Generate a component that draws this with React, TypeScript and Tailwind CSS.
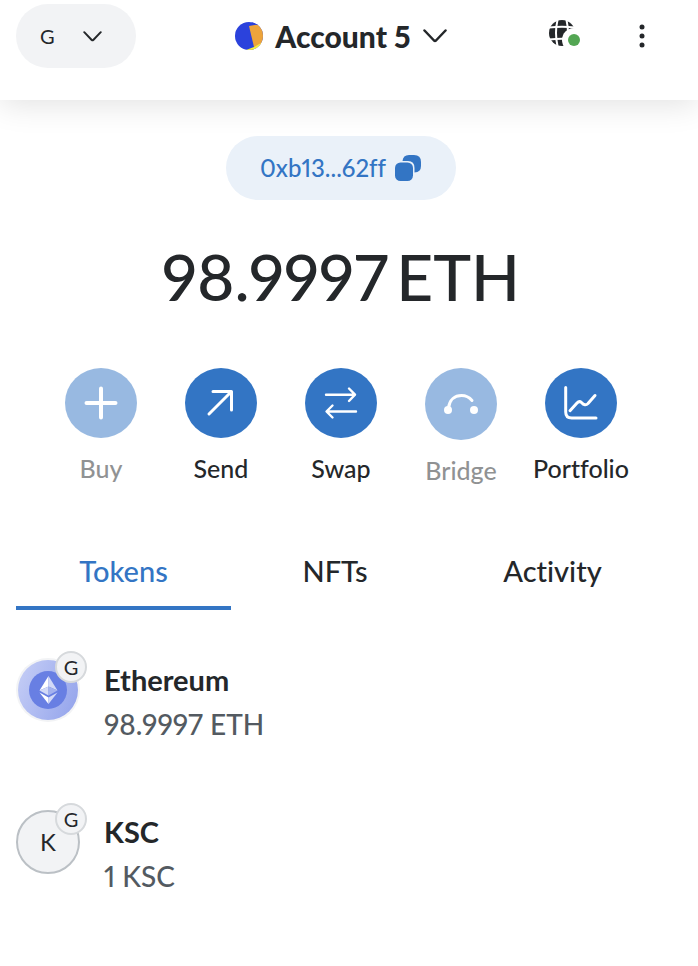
import type { ReactNode } from "react";

function Chevron({ className }: { className: string }) {
  return (
    <svg viewBox="0 0 24 14" className={className} fill="none" stroke="currentColor" strokeWidth="2.500" strokeLinecap="round" strokeLinejoin="round" aria-hidden="true">
      <path d="M1.500 1.500 L11 11.500 Q12 12.300 13 11.500 L22.500 1.500" />
    </svg>
  );
}

function Header() {
  return (
    <header className="grid h-[100px] grid-cols-[1fr_auto_1fr] items-start bg-white pt-1 pr-4 shadow-[0_4px_30px_rgba(0,0,0,0.12)]">
      <div className="flex pl-4">
        <button type="button" aria-label="Network G" className="flex h-16 w-[120px] items-center gap-7 rounded-full bg-[#f2f3f5] pl-6 text-xl">
          G
          <Chevron className="h-[11px] w-[19px]" />
        </button>
      </div>
      <button type="button" className="flex h-16 items-center gap-3 text-[30px] font-black">
        <svg viewBox="0 0 28 28" className="size-7" aria-hidden="true">
          <defs>
            <clipPath id="avatar-clip">
              <circle cx="14" cy="14" r="14" />
            </clipPath>
          </defs>
          <g clipPath="url(#avatar-clip)">
            <rect width="28" height="28" fill="#2b42dc" />
            <path d="M14 4 L30 1 V23 L19 25 Z" fill="#eda43b" />
            <path d="M11 28 L19 25 L30 19 V30 H11 Z" fill="#f8f03c" />
            <path d="M16 0 L21 3 L30 1 V0 Z" fill="#2b42dc" />
          </g>
        </svg>
        Account 5
        <Chevron className="h-3.5 w-6" />
      </button>
      <div className="flex h-16 items-center justify-end gap-[58px] pr-[37px]">
        <button type="button" aria-label="Connected sites">
          <svg viewBox="0 0 32 32" className="size-8" aria-hidden="true">
            <circle cx="13" cy="13" r="13" fill="#24272a" />
            <g fill="none" stroke="#fff" strokeWidth="2">
              <path d="M0 7.500 Q13 6 26 7.500 M0 19.500 Q13 18 26 19.500" />
              <path d="M8.500 0 Q5.500 13 8.500 26 M17.500 0 Q20.500 13 17.500 26" />
            </g>
            <circle cx="25" cy="20" r="12" fill="#fff" />
            <circle cx="25" cy="20" r="6" fill="#53a653" />
          </svg>
        </button>
        <button type="button" aria-label="Account options">
          <svg viewBox="0 0 6 24" className="h-6 w-1.5" fill="#24272a" aria-hidden="true">
            <circle cx="3" cy="3" r="2.500" />
            <circle cx="3" cy="12" r="2.500" />
            <circle cx="3" cy="21" r="2.500" />
          </svg>
        </button>
      </div>
    </header>
  );
}

function Action({ label, disabled = false, tall = false, children }: { label: string; disabled?: boolean; tall?: boolean; children: ReactNode }) {
  return (
    <button type="button" disabled={disabled} className="flex w-[120px] flex-col items-center gap-3.5 text-[25px] leading-8 font-medium disabled:opacity-50">
      <span className={`flex w-[72px] items-center justify-center rounded-[50%] bg-[#3375c4] ${tall ? "h-[72px]" : "h-[70px]"}`}>
        <svg viewBox="0 0 36 36" className="size-9" fill="none" stroke="#fff" strokeLinecap="round" strokeLinejoin="round" aria-hidden="true">
          {children}
        </svg>
      </span>
      {label}
    </button>
  );
}

function Tab({ label, active = false }: { label: string; active?: boolean }) {
  return (
    <button
      type="button"
      role="tab"
      aria-selected={active}
      className={`h-[74px] border-b-4 text-[29px] font-medium ${active ? "border-[#3375c4] text-[#3375c4]" : "border-transparent"}`}
    >
      {label}
    </button>
  );
}

function TokenRow({ icon, name, amount }: { icon: ReactNode; name: string; amount: string }) {
  return (
    <li className="flex h-[152px] items-start gap-6 pt-12">
      <div className="relative size-16">
        {icon}
        <span className="absolute -top-[7px] -right-[7px] flex size-8 items-center justify-center rounded-full border-2 border-[#d6d9dc] bg-[#f2f3f5] text-xl">G</span>
      </div>
      <div className="leading-[44px]">
        <p className="text-[29px] font-bold">{name}</p>
        <p className="text-[28px] font-medium text-[#535a61]">{amount}</p>
      </div>
    </li>
  );
}

function EthereumIcon() {
  return (
    <svg viewBox="0 0 64 64" className="size-16" aria-hidden="true">
      <defs>
        <linearGradient id="eth-ring" x1="0" x2="1" y1="0.3" y2="0.7">
          <stop offset="0" stopColor="#c2cbf5" />
          <stop offset="1" stopColor="#96a6ec" />
        </linearGradient>
      </defs>
      <circle cx="32" cy="32" r="32" fill="#f2f3f5" />
      <circle cx="32" cy="32" r="30" fill="url(#eth-ring)" />
      <circle cx="32" cy="32" r="19" fill="#687fe3" />
      <path d="M32.500 18 L23.500 32.500 L32.500 28.500 Z" fill="#fff" />
      <path d="M32.500 18 L41.500 32.500 L32.500 28.500 Z" fill="#d2d9f7" />
      <path d="M23.500 32.500 L32.500 28.500 V37.500 Z" fill="#d2d9f7" />
      <path d="M41.500 32.500 L32.500 28.500 V37.500 Z" fill="#a4b2ee" />
      <path d="M23.500 34.500 L32.500 39.500 V46 Z" fill="#fff" />
      <path d="M41.500 34.500 L32.500 39.500 V46 Z" fill="#d2d9f7" />
    </svg>
  );
}

export default function App() {
  return (
    <div className="min-h-screen overflow-x-hidden bg-white font-['Lato','Liberation_Sans',sans-serif] text-[#24272a] proportional-nums [font-variant-ligatures:none]">
      <Header />
      <main className="flex flex-col items-center pt-9 pr-4">
        <button type="button" className="flex h-16 w-[230px] items-center justify-center gap-2 rounded-full bg-[#eaf1f9] text-2xl font-medium text-[#3375c4]">
          0xb13...62ff
          <svg viewBox="0 0 28 28" className="size-7" fill="currentColor" aria-hidden="true">
            <path d="M8.500 7 Q9 1 15 1 H20 Q27 1 27 8 V12 Q27 18 20.500 18.500 V14 Q20.500 7 14 7 Z" />
            <rect x="1" y="8.500" width="18" height="18.500" rx="5.500" />
          </svg>
        </button>
        <h1 className="mt-[38px] flex gap-2 text-[64px] leading-[78px] font-medium">
          <span>98.9997</span>
          <span>ETH</span>
        </h1>
        <div className="mt-[52px] flex items-start">
          <Action label="Buy" disabled>
            <path d="M18 3.500 V32.500 M3.500 18 H32.500" strokeWidth="4" />
          </Action>
          <Action label="Send">
            <path d="M6 29 L28 7 M10 6.500 H28.500 V25" strokeWidth="3" />
          </Action>
          <Action label="Swap">
            <path d="M3 9.700 H32 M26 3.500 L32 9.700 L26 16 M33 26.500 H4 M9.500 20.500 L3.500 26.500 L9.500 32.500" strokeWidth="2.400" />
          </Action>
          <Action label="Bridge" disabled tall>
            <path d="M5.500 22 C6.500 13.500 12 9.500 18.500 9.500 C23 9.500 26.500 11.500 29 14.500" strokeWidth="3" />
            <circle cx="5" cy="24" r="4" fill="#fff" stroke="none" />
            <circle cx="31" cy="24" r="4" fill="#fff" stroke="none" />
          </Action>
          <Action label="Portfolio">
            <path d="M2.700 2.500 V27 Q2.700 33 8.700 33 H33 M7 25.700 L14 18 Q16.300 15.500 18.500 17.500 Q22 21.500 25 18.500 L32 10.500" strokeWidth="3" />
          </Action>
        </div>
      </main>
      <div role="tablist" className="mt-[50px] mr-8 grid grid-cols-[215fr_208fr_227fr] pl-4">
        <Tab label="Tokens" active />
        <Tab label="NFTs" />
        <Tab label="Activity" />
      </div>
      <ul className="pl-4">
        <TokenRow icon={<EthereumIcon />} name="Ethereum" amount="98.9997 ETH" />
        <TokenRow
          icon={<span className="flex size-16 items-center justify-center rounded-full border-2 border-[#bbc0c5] bg-[#f2f3f5] text-2xl">K</span>}
          name="KSC"
          amount="1 KSC"
        />
      </ul>
    </div>
  );
}
